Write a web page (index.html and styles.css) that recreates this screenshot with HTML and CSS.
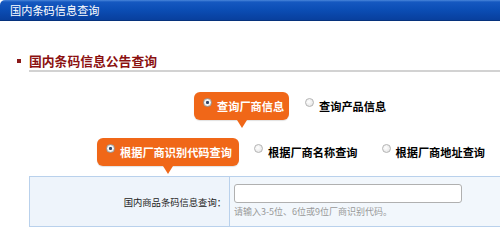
FILE: index.html
```html
<!DOCTYPE html>
<html lang="zh-CN">
<head>
<meta charset="utf-8">
<title>国内条码信息查询</title>
<link rel="stylesheet" href="styles.css">
</head>
<body>
<div class="topbar">国内条码信息查询</div>
<div class="section-title">
  <span class="bullet"></span>
  <h2 class="title-text">国内条码信息公告查询</h2>
</div>
<div class="choice-row row-type">
  <label class="bubble bubble-type"><span class="radio checked"></span><span class="opt-text">查询厂商信息</span></label>
  <label class="option option-first"><span class="radio"></span><span class="opt-text">查询产品信息</span></label>
</div>
<div class="choice-row row-mode">
  <label class="bubble bubble-mode"><span class="radio checked"></span><span class="opt-text">根据厂商识别代码查询</span></label>
  <label class="option option-name"><span class="radio"></span><span class="opt-text">根据厂商名称查询</span></label>
  <label class="option option-addr"><span class="radio"></span><span class="opt-text">根据厂商地址查询</span></label>
</div>
<div class="query-table">
  <div class="label-cell">国内商品条码信息查询：</div>
  <div class="input-cell">
    <input class="text-input" type="text">
    <div class="hint">请输入3-5位、6位或9位厂商识别代码。</div>
  </div>
</div>
</body>
</html>
```
FILE: styles.css
```css
body {
  margin: 0;
  background: #fff;
  font-family: "Noto Sans CJK SC", "Noto Sans", sans-serif;
}

.topbar {
  height: 21px;
  box-sizing: border-box;
  border-top-left-radius: 5px;
  background: linear-gradient(#4a86da 0, #1558c0 2px, #0b4db4 50%, #083f9d 100%);
  border-bottom: 1px solid #06327c;
  color: #fff;
  font-size: 11.2px;
  line-height: 20px;
  padding-left: 10px;
}

.section-title {
  display: flex;
  align-items: flex-start;
  margin-top: 31px;
  padding-left: 17px;
}

.bullet {
  width: 4px;
  height: 4px;
  background: #8b1a1a;
  margin-top: 7px;
  margin-right: 8px;
  flex: none;
}

.title-text {
  flex: 1;
  margin: 0;
  font-size: 12.8px;
  font-weight: bold;
  color: #8b1010;
  line-height: 18px;
  border-bottom: 2px solid #d2d2d2;
}

.choice-row {
  display: flex;
  align-items: flex-start;
}

.row-type {
  margin-top: 20px;
  padding-left: 194px;
}

.row-mode {
  margin-top: 18px;
  padding-left: 97px;
}

.bubble {
  position: relative;
  display: flex;
  align-items: flex-start;
  height: 28px;
  box-sizing: border-box;
  padding-left: 9px;
  background: #f06718;
  border-radius: 6px;
  color: #fff;
  box-shadow: 0 1px 1px rgba(0, 0, 0, 0.12);
}

.bubble::after {
  content: "";
  position: absolute;
  left: 50%;
  bottom: -8px;
  margin-left: -5px;
  border-left: 5px solid transparent;
  border-right: 5px solid transparent;
  border-top: 8px solid #f06718;
}

.bubble-type { width: 95px; }
.bubble-mode { width: 142px; }

.option {
  display: flex;
  align-items: flex-start;
  height: 28px;
  color: #000;
}

.option-first { margin-left: 16px; }
.option-name { margin-left: 15px; }
.option-addr { margin-left: 24px; }

.radio {
  flex: none;
  width: 9px;
  height: 9px;
  box-sizing: border-box;
  border-radius: 50%;
  border: 1px solid #b4b4b4;
  background: radial-gradient(circle at 40% 40%, #fff 0, #e9e9e9 70%, #d4d4d4 100%);
  margin-top: 6px;
  margin-right: 5px;
}

.radio.checked {
  border-color: #9a9a9a;
  background: radial-gradient(circle, #34466a 0, #34466a 1.2px, #f4f4f4 2px, #e6e6e6 100%);
}

.opt-text {
  font-size: 11.2px;
  font-weight: bold;
  line-height: 14px;
  margin-top: 7px;
  white-space: nowrap;
}

.query-table {
  display: flex;
  align-items: stretch;
  margin-top: 10px;
  margin-left: 29px;
  border: 1px solid #b9d1ec;
  border-right: none;
  background: #eef4fb;
}

.label-cell {
  width: 200px;
  flex: none;
  box-sizing: border-box;
  border-right: 1px solid #b9d1ec;
  padding-right: 3px;
  display: flex;
  align-items: center;
  justify-content: flex-end;
  font-size: 9.3px;
  line-height: 12px;
  color: #222;
  white-space: nowrap;
}

.input-cell {
  flex: 1;
  padding: 7px 0 8px 4px;
  background: #f2f7fc;
}

.text-input {
  display: block;
  width: 228px;
  height: 19px;
  box-sizing: border-box;
  margin: 0;
  padding: 0 3px;
  border: 1px solid #b0b0b0;
  border-radius: 3px;
  background: #fff;
}

.hint {
  margin-top: 3px;
  font-size: 9px;
  line-height: 12px;
  color: #999;
  white-space: nowrap;
}
```
